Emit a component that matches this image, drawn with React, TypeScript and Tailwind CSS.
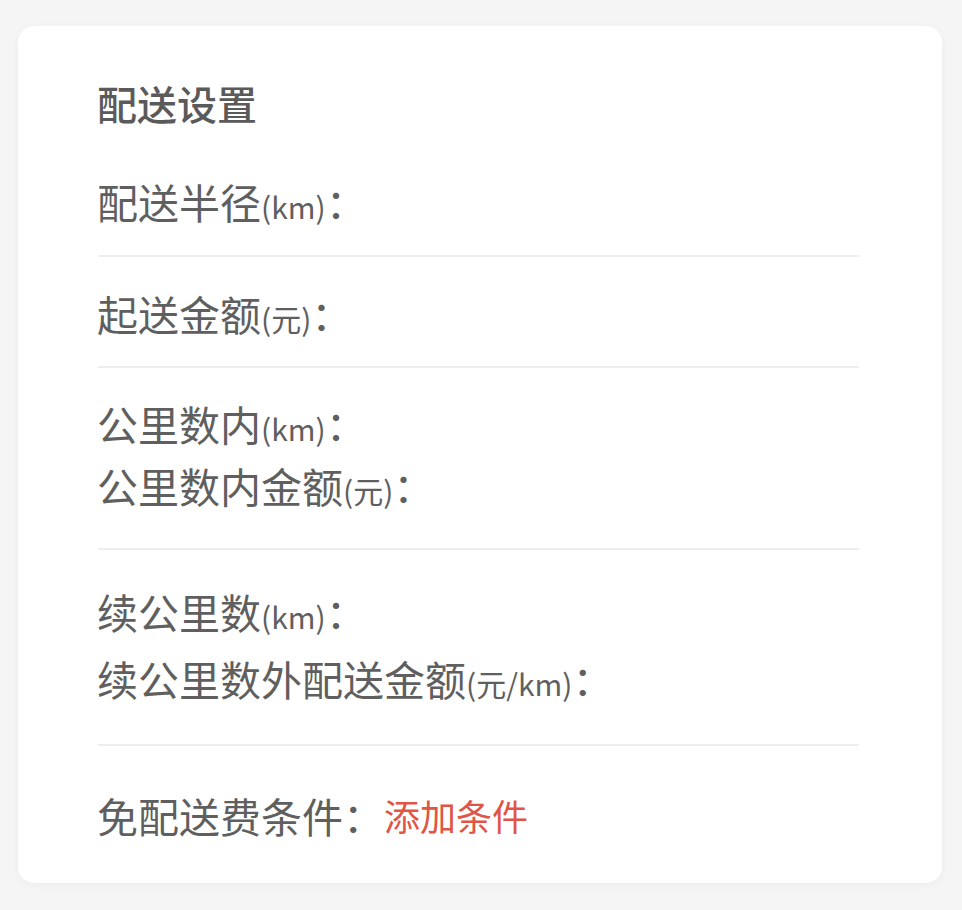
export default function App() {
  const font = { fontFamily: '"Noto Sans CJK SC", "Noto Sans", sans-serif' };
  const Label = ({ main, unit }: { main: string; unit?: string }) => (
    <div className="h-[40px] text-[41px] leading-[40px] text-[#5f5f5f] whitespace-nowrap">
      {main}
      {unit && <span className="text-[30px] leading-none">{unit}</span>}
      <span>：</span>
    </div>
  );
  return (
    <div className="min-h-[910px] bg-[#f5f5f5] pt-[26px] pl-[18px]" style={font}>
      <div className="w-[924px] h-[857px] bg-white rounded-[16px] shadow-[0_2px_8px_rgba(0,0,0,0.04)] pl-[79px] pr-[83px] pt-[57px]">
        <div className="h-[40px] text-[40px] leading-[40px] font-medium text-[#5a5a5a]">配送设置</div>
        <div className="mt-[58px]">
          <Label main="配送半径" unit="(km)" />
        </div>
        <div className="mt-[34px] ml-[1px] h-[2px] bg-[#eeeeee]" />
        <div className="mt-[36px]">
          <Label main="起送金额" unit="(元)" />
        </div>
        <div className="mt-[33px] ml-[1px] h-[2px] bg-[#eeeeee]" />
        <div className="mt-[35px] flex flex-col gap-[22px]">
          <Label main="公里数内" unit="(km)" />
          <Label main="公里数内金额" unit="(元)" />
        </div>
        <div className="mt-[43px] ml-[1px] h-[2px] bg-[#eeeeee]" />
        <div className="mt-[41px] flex flex-col gap-[27px]">
          <Label main="续公里数" unit="(km)" />
          <Label main="续公里数外配送金额" unit="(元/km)" />
        </div>
        <div className="mt-[46px] ml-[1px] h-[2px] bg-[#eeeeee]" />
        <div className="mt-[49px] h-[40px] flex items-center leading-[40px] whitespace-nowrap">
          <span className="text-[41px] text-[#5f5f5f]">免配送费条件：</span>
          <span className="text-[36px] text-[#e05545]">添加条件</span>
        </div>
      </div>
    </div>
  );
}
